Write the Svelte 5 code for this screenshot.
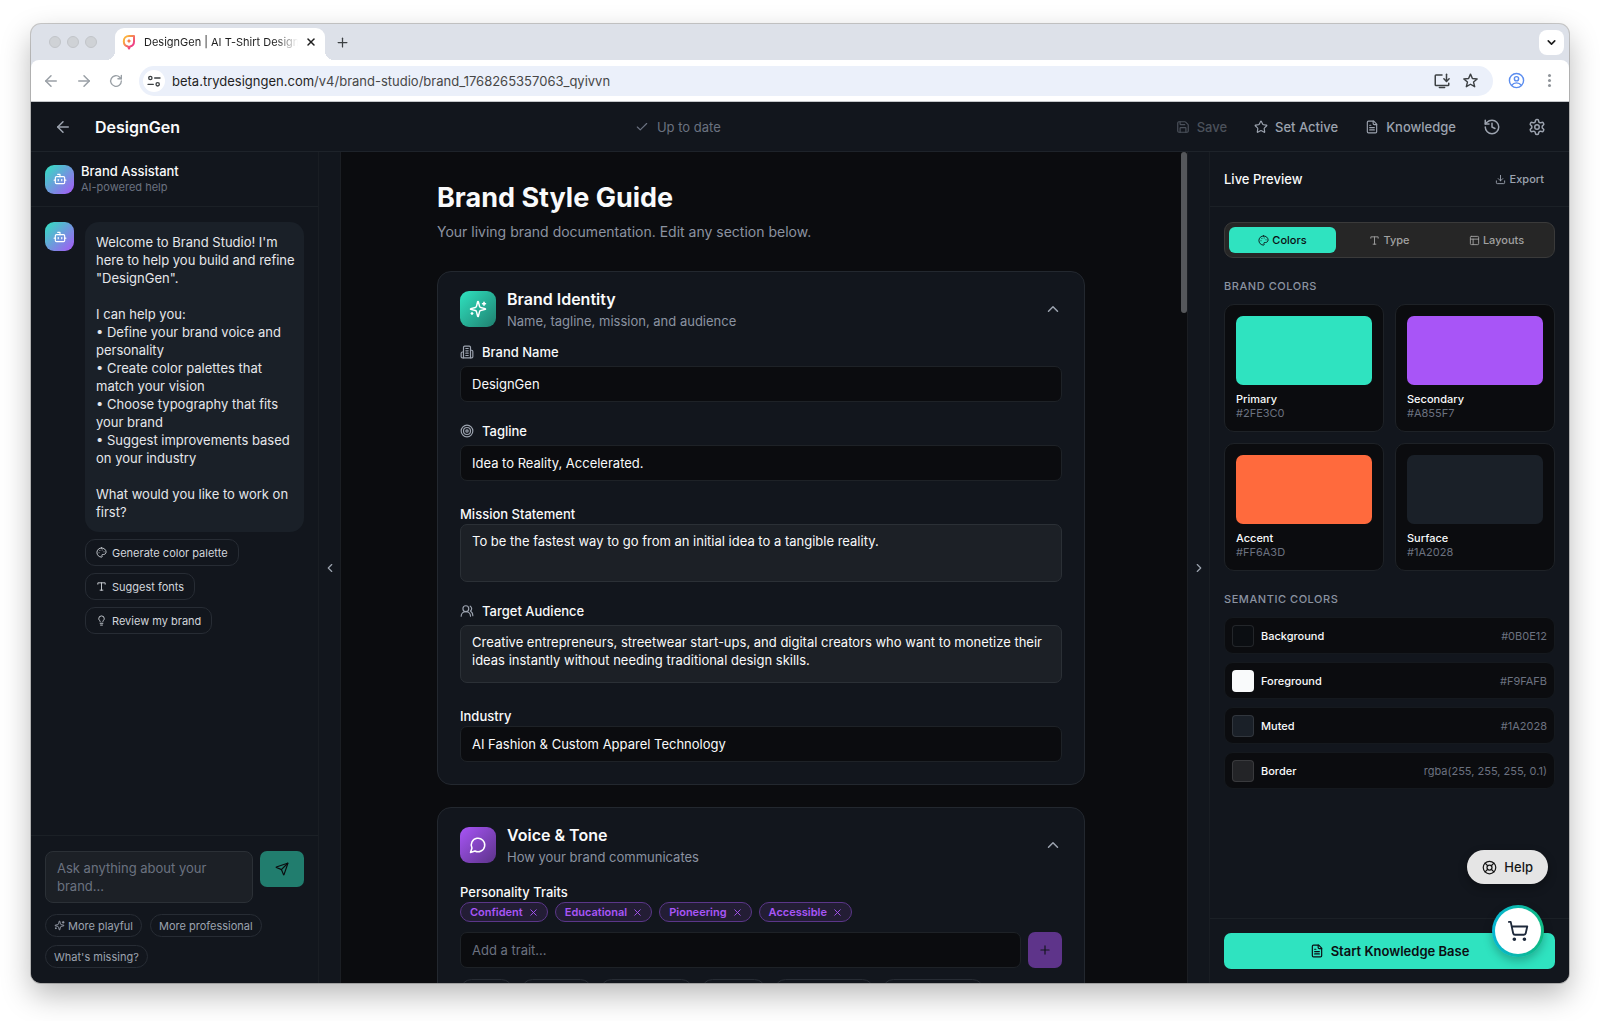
<script lang="ts">
  const icons: Record<string, string[]> = {
    arrowLeft: ["m12 19-7-7 7-7", "M19 12H5"],
    arrowRight: ["m12 5 7 7-7 7", "M5 12h14"],
    reload: ["M20 12a8 8 0 1 1-2.4-5.7L20 8.6", "M20 3.5v5.1h-5.1"],
    close: ["M18 6 6 18", "m6 6 12 12"],
    plus: ["M5 12h14", "M12 5v14"],
    check: ["M20 6 9 17l-5-5"],
    chevronDown: ["m6 9 6 6 6-6"],
    chevronUp: ["m18 15-6-6-6 6"],
    chevronLeft: ["m15 18-6-6 6-6"],
    chevronRight: ["m9 18 6-6-6-6"],
    tune: [
      "M4 7.5a2.5 2.5 0 1 0 5 0a2.5 2.5 0 1 0-5 0",
      "M13 7.5h8",
      "M3 17h8",
      "M15 17a2.5 2.5 0 1 0 5 0a2.5 2.5 0 1 0-5 0",
    ],
    install: [
      "M12 4H4a1 1 0 0 0-1 1v12a1 1 0 0 0 1 1h16a1 1 0 0 0 1-1v-2",
      "M18 3v9",
      "m14.5 9 3.5 3.5L21.5 9",
      "M8.5 20.5h7",
    ],
    sharpStar: [
      "m12 3 2.7 6.2 6.7.6-5.1 4.4 1.6 6.6L12 17.3l-5.9 3.5 1.6-6.6-5.1-4.4 6.7-.6z",
    ],
    profile: [
      "M2 12a10 10 0 1 0 20 0a10 10 0 1 0-20 0",
      "M9 9.5a3 3 0 1 0 6 0a3 3 0 1 0-6 0",
      "M5.5 18.5c1.5-2.3 3.8-3.2 6.5-3.2s5 .9 6.5 3.2",
    ],
    save: [
      "M15.2 3a2 2 0 0 1 1.4.6l3.8 3.8a2 2 0 0 1 .6 1.4V19a2 2 0 0 1-2 2H5a2 2 0 0 1-2-2V5a2 2 0 0 1 2-2z",
      "M17 21v-7a1 1 0 0 0-1-1H8a1 1 0 0 0-1 1v7",
      "M7 3v4a1 1 0 0 0 1 1h7",
    ],
    star: [
      "M11.525 2.295a.53.53 0 0 1 .95 0l2.31 4.679a2.123 2.123 0 0 0 1.595 1.16l5.166.756a.53.53 0 0 1 .294.904l-3.736 3.638a2.123 2.123 0 0 0-.611 1.878l.882 5.14a.53.53 0 0 1-.771.56l-4.618-2.428a2.122 2.122 0 0 0-1.973 0L6.396 21.01a.53.53 0 0 1-.77-.56l.881-5.139a2.122 2.122 0 0 0-.611-1.879L2.16 9.795a.53.53 0 0 1 .294-.906l5.165-.755a2.122 2.122 0 0 0 1.597-1.16z",
    ],
    file: [
      "M15 2H6a2 2 0 0 0-2 2v16a2 2 0 0 0 2 2h12a2 2 0 0 0 2-2V7Z",
      "M14 2v4a2 2 0 0 0 2 2h4",
      "M10 9H8",
      "M16 13H8",
      "M16 17H8",
    ],
    history: [
      "M3 12a9 9 0 1 0 9-9 9.75 9.75 0 0 0-6.74 2.74L3 8",
      "M3 3v5h5",
      "M12 7v5l4 2",
    ],
    settings: [
      "M12.22 2h-.44a2 2 0 0 0-2 2v.18a2 2 0 0 1-1 1.73l-.43.25a2 2 0 0 1-2 0l-.15-.08a2 2 0 0 0-2.73.73l-.22.38a2 2 0 0 0 .73 2.73l.15.1a2 2 0 0 1 1 1.72v.51a2 2 0 0 1-1 1.74l-.15.09a2 2 0 0 0-.73 2.73l.22.38a2 2 0 0 0 2.73.73l.15-.08a2 2 0 0 1 2 0l.43.25a2 2 0 0 1 1 1.73V20a2 2 0 0 0 2 2h.44a2 2 0 0 0 2-2v-.18a2 2 0 0 1 1-1.73l.43-.25a2 2 0 0 1 2 0l.15.08a2 2 0 0 0 2.73-.73l.22-.39a2 2 0 0 0-.73-2.73l-.15-.08a2 2 0 0 1-1-1.74v-.5a2 2 0 0 1 1-1.74l.15-.09a2 2 0 0 0 .73-2.73l-.22-.38a2 2 0 0 0-2.73-.73l-.15.08a2 2 0 0 1-2 0l-.43-.25a2 2 0 0 1-1-1.73V4a2 2 0 0 0-2-2z",
      "M9 12a3 3 0 1 0 6 0a3 3 0 1 0-6 0",
    ],
    bot: [
      "M12 8V4H8",
      "M6 8h12a2 2 0 0 1 2 2v8a2 2 0 0 1-2 2H6a2 2 0 0 1-2-2v-8a2 2 0 0 1 2-2z",
      "M2 14h2",
      "M20 14h2",
      "M15 13v2",
      "M9 13v2",
    ],
    palette: [
      "M12 2C6.5 2 2 6.5 2 12s4.5 10 10 10c.926 0 1.648-.746 1.648-1.688 0-.437-.18-.835-.437-1.125-.29-.289-.438-.652-.438-1.125a1.64 1.64 0 0 1 1.668-1.668h1.996c3.051 0 5.555-2.503 5.555-5.554C21.965 6.012 17.461 2 12 2z",
      "M13.5 6.5h.01",
      "M17.5 10.5h.01",
      "M8.5 7.5h.01",
      "M6.5 12.5h.01",
    ],
    type: ["M4 7V4h16v3", "M9 20h6", "M12 4v16"],
    bulb: [
      "M15 14c.2-1 .7-1.7 1.5-2.5 1-.9 1.5-2.2 1.5-3.5A6 6 0 0 0 6 8c0 1 .2 2.2 1.5 3.5.7.7 1.3 1.5 1.5 2.5",
      "M9 18h6",
      "M10 22h4",
    ],
    send: [
      "M14.536 21.686a.5.5 0 0 0 .937-.024l6.5-19a.496.496 0 0 0-.635-.635l-19 6.5a.5.5 0 0 0-.024.937l7.93 3.18a2 2 0 0 1 1.112 1.11z",
      "m21.854 2.147-10.94 10.939",
    ],
    sparkles: [
      "M9.937 15.5A2 2 0 0 0 8.5 14.063l-6.135-1.582a.5.5 0 0 1 0-.962L8.5 9.936A2 2 0 0 0 9.937 8.5l1.582-6.135a.5.5 0 0 1 .963 0L14.063 8.5A2 2 0 0 0 15.5 9.937l6.135 1.581a.5.5 0 0 1 0 .964L15.5 14.063a2 2 0 0 0-1.437 1.437l-1.582 6.135a.5.5 0 0 1-.963 0z",
      "M20 3v4",
      "M22 5h-4",
      "M4 17v2",
      "M5 18H3",
    ],
    building: [
      "M6 22V4a2 2 0 0 1 2-2h8a2 2 0 0 1 2 2v18Z",
      "M6 12H4a2 2 0 0 0-2 2v6a2 2 0 0 0 2 2h2",
      "M18 9h2a2 2 0 0 1 2 2v9a2 2 0 0 1-2 2h-2",
      "M10 6h4",
      "M10 10h4",
      "M10 14h4",
      "M10 18h4",
    ],
    target: [
      "M2 12a10 10 0 1 0 20 0a10 10 0 1 0-20 0",
      "M6 12a6 6 0 1 0 12 0a6 6 0 1 0-12 0",
      "M10 12a2 2 0 1 0 4 0a2 2 0 1 0-4 0",
    ],
    users: [
      "M18 21a8 8 0 0 0-16 0",
      "M5 8a5 5 0 1 0 10 0a5 5 0 1 0-10 0",
      "M22 20c0-3.37-2-6.5-4-8a5 5 0 0 0-.45-8.3",
    ],
    message: ["M7.9 20A9 9 0 1 0 4 16.1L2 22Z"],
    download: [
      "M21 15v4a2 2 0 0 1-2 2H5a2 2 0 0 1-2-2v-4",
      "m7 10 5 5 5-5",
      "M12 15V3",
    ],
    layout: [
      "M5 3h14a2 2 0 0 1 2 2v14a2 2 0 0 1-2 2H5a2 2 0 0 1-2-2V5a2 2 0 0 1 2-2z",
      "M3 9h18",
      "M9 21V9",
    ],
    lifebuoy: [
      "M2 12a10 10 0 1 0 20 0a10 10 0 1 0-20 0",
      "m4.93 4.93 4.24 4.24",
      "m14.83 9.17 4.24-4.24",
      "m14.83 14.83 4.24 4.24",
      "m9.17 14.83-4.24 4.24",
      "M8 12a4 4 0 1 0 8 0a4 4 0 1 0-8 0",
    ],
    cart: [
      "M7 21a1 1 0 1 0 2 0a1 1 0 1 0-2 0",
      "M18 21a1 1 0 1 0 2 0a1 1 0 1 0-2 0",
      "M2.05 2.05h2l2.66 12.42a2 2 0 0 0 2 1.58h9.78a2 2 0 0 0 1.95-1.57l1.65-7.43H5.12",
    ],
  };

  const welcome = `Welcome to Brand Studio! I'm here to help you build and refine "DesignGen".

I can help you:
• Define your brand voice and personality
• Create color palettes that match your vision
• Choose typography that fits your brand
• Suggest improvements based on your industry

What would you like to work on first?`;

  const suggestions = [
    { icon: "palette", label: "Generate color palette" },
    { icon: "type", label: "Suggest fonts" },
    { icon: "bulb", label: "Review my brand" },
  ];

  const tabs = [
    { icon: "palette", label: "Colors" },
    { icon: "type", label: "Type" },
    { icon: "layout", label: "Layouts" },
  ];

  const brandColors = [
    { name: "Primary", value: "#2FE3C0" },
    { name: "Secondary", value: "#A855F7" },
    { name: "Accent", value: "#FF6A3D" },
    { name: "Surface", value: "#1A2028" },
  ];

  const semanticColors = [
    { name: "Background", value: "#0B0E12" },
    { name: "Foreground", value: "#F9FAFB" },
    { name: "Muted", value: "#1A2028" },
    { name: "Border", value: "rgba(255, 255, 255, 0.1)" },
  ];

  // widths of the placeholder pills under the trait input
  const pillWidths = [53, 71, 93, 65, 100, 102];

  let activeTab = $state("Colors");
  let identityOpen = $state(true);
  let voiceOpen = $state(true);
  let message = $state("");
  let newTrait = $state("");
  let traits = $state(["Confident", "Educational", "Pioneering", "Accessible"]);
  let brand = $state({
    name: "DesignGen",
    tagline: "Idea to Reality, Accelerated.",
    mission: "To be the fastest way to go from an initial idea to a tangible reality.",
    audience:
      "Creative entrepreneurs, streetwear start-ups, and digital creators who want to monetize their ideas instantly without needing traditional design skills.",
    industry: "AI Fashion & Custom Apparel Technology",
  });

  let add_trait = () => {
    if (newTrait.trim() === "") return;
    traits.push(newTrait.trim());
    newTrait = "";
  };
  let remove_trait = (trait: string) => {
    traits = traits.filter((t) => t !== trait);
  };
</script>

{#snippet icon(name: string, size = 14, stroke = 2)}
  <svg
    width={size}
    height={size}
    viewBox="0 0 24 24"
    fill="none"
    stroke="currentColor"
    stroke-width={stroke}
    stroke-linecap="round"
    stroke-linejoin="round"
    aria-hidden="true"
  >
    {#each icons[name] as d}
      <path {d} />
    {/each}
  </svg>
{/snippet}

<div class="desktop">
  <div class="window">
    <div class="tab-strip">
      <div class="lights"><i></i><i></i><i></i></div>
      <div class="browser-tab">
        <svg width="16" height="18" viewBox="0 0 16 18" fill="none" aria-hidden="true">
          <defs>
            <linearGradient id="fav" x1="0" y1="0" x2="1" y2="1">
              <stop offset="0.2" stop-color="#fbae3c" />
              <stop offset="0.8" stop-color="#ee3f86" />
            </linearGradient>
          </defs>
          <path
            d="M8 3h5v5.500c0 2.800-1.500 4.600-4 5L8 15.500l-1-2C4.300 13 2.800 11 2.800 8.200 2.800 5.200 5 3 8 3z"
            stroke="url(#fav)"
            stroke-width="2"
            stroke-linejoin="round"
          />
          <path d="M8 5.500l.8 1.700 1.700.8-1.700.8L8 10.500l-.8-1.700L5.500 8l1.700-.8z" fill="#f7763f" />
        </svg>
        <span class="tab-title">DesignGen | AI T-Shirt Design</span>
        <button class="plain" aria-label="Close tab">{@render icon("close", 12, 3)}</button>
      </div>
      <button class="plain new-tab" aria-label="New tab">{@render icon("plus", 15, 2)}</button>
      <button class="tab-search" aria-label="Search tabs">{@render icon("chevronDown", 13, 3)}</button>
    </div>

    <div class="toolbar">
      <button class="plain dim" aria-label="Back">{@render icon("arrowLeft", 18, 2)}</button>
      <button class="plain dim" aria-label="Forward">{@render icon("arrowRight", 18, 2)}</button>
      <button class="plain dim" aria-label="Reload">{@render icon("reload", 16, 2)}</button>
      <div class="address">
        <button class="site-info" aria-label="Site information">{@render icon("tune", 16, 2)}</button>
        <span class="url"><b>beta.trydesigngen.com</b>/v4/brand-studio/brand_1768265357063_qyivvn</span>
        <button class="plain" aria-label="Install app">{@render icon("install", 18, 2)}</button>
        <button class="plain" aria-label="Bookmark">{@render icon("sharpStar", 17, 2)}</button>
      </div>
      <button class="plain profile" aria-label="Profile">{@render icon("profile", 17, 2)}</button>
      <button class="plain dots" aria-label="Menu"><i></i><i></i><i></i></button>
    </div>

    <div class="app">
      <header class="app-header">
        <div class="header-side">
          <button class="plain" aria-label="Back">{@render icon("arrowLeft", 18, 2)}</button>
          <span class="brand-name">DesignGen</span>
        </div>
        <span class="status">{@render icon("check", 14, 2)}Up to date</span>
        <div class="header-side actions">
          <button class="plain disabled" disabled>{@render icon("save", 14)}Save</button>
          <button class="plain">{@render icon("star", 14)}Set Active</button>
          <button class="plain">{@render icon("file", 14)}Knowledge</button>
          <button class="plain" aria-label="History">{@render icon("history", 18)}</button>
          <button class="plain" aria-label="Settings">{@render icon("settings", 18)}</button>
        </div>
      </header>

      <div class="columns">
        <aside class="assistant">
          <div class="panel-header">
            <span class="avatar">{@render icon("bot", 14)}</span>
            <div>
              <h2>Brand Assistant</h2>
              <p class="hint">AI-powered help</p>
            </div>
          </div>
          <div class="chat">
            <span class="avatar">{@render icon("bot", 14)}</span>
            <div class="chat-body">
              <p class="bubble">{welcome}</p>
              {#each suggestions as item}
                <button class="suggestion">{@render icon(item.icon, 11)}{item.label}</button>
              {/each}
            </div>
          </div>
          <div class="composer">
            <div class="composer-row">
              <textarea
                rows="2"
                aria-label="Message"
                placeholder="Ask anything about your brand..."
                bind:value={message}
              ></textarea>
              <button class="send" aria-label="Send">{@render icon("send", 14)}</button>
            </div>
            <div class="prompts">
              <button class="pill">{@render icon("sparkles", 11)}More playful</button>
              <button class="pill">More professional</button>
              <button class="pill">What's missing?</button>
            </div>
          </div>
        </aside>
        <button class="handle left" aria-label="Collapse assistant">{@render icon("chevronLeft", 14)}</button>

        <main>
          <div class="guide">
            <h1>Brand Style Guide</h1>
            <p class="lead">Your living brand documentation. Edit any section below.</p>

            <section class="card">
              <button class="card-header" onclick={() => (identityOpen = !identityOpen)}>
                <span class="card-icon teal">{@render icon("sparkles", 18)}</span>
                <span class="card-title">
                  <strong>Brand Identity</strong>
                  <span>Name, tagline, mission, and audience</span>
                </span>
                {@render icon(identityOpen ? "chevronUp" : "chevronDown", 18, 2)}
              </button>
              {#if identityOpen}
                <div class="fields">
                  <div class="field">
                    <label class="with-icon" for="name">{@render icon("building")}Brand Name</label>
                    <input id="name" type="text" bind:value={brand.name} />
                  </div>
                  <div class="field">
                    <label class="with-icon" for="tagline">{@render icon("target")}Tagline</label>
                    <input id="tagline" type="text" bind:value={brand.tagline} />
                  </div>
                  <div class="field">
                    <label for="mission">Mission Statement</label>
                    <textarea id="mission" bind:value={brand.mission}></textarea>
                  </div>
                  <div class="field">
                    <label class="with-icon" for="audience">{@render icon("users")}Target Audience</label>
                    <textarea id="audience" bind:value={brand.audience}></textarea>
                  </div>
                  <div class="field">
                    <label for="industry">Industry</label>
                    <input id="industry" type="text" bind:value={brand.industry} />
                  </div>
                </div>
              {/if}
            </section>

            <section class="card">
              <button class="card-header" onclick={() => (voiceOpen = !voiceOpen)}>
                <span class="card-icon purple">{@render icon("message", 18)}</span>
                <span class="card-title">
                  <strong>Voice &amp; Tone</strong>
                  <span>How your brand communicates</span>
                </span>
                {@render icon(voiceOpen ? "chevronUp" : "chevronDown", 18, 2)}
              </button>
              {#if voiceOpen}
                <div class="field">
                  <label for="trait">Personality Traits</label>
                  <div class="traits">
                    {#each traits as trait}
                      <span class="trait">
                        {trait}
                        <button class="plain" aria-label="Remove {trait}" onclick={() => remove_trait(trait)}>
                          {@render icon("close", 11)}
                        </button>
                      </span>
                    {/each}
                  </div>
                  <div class="trait-row">
                    <input id="trait" type="text" placeholder="Add a trait..." bind:value={newTrait} />
                    <button class="add" aria-label="Add trait" onclick={add_trait}>{@render icon("plus", 14)}</button>
                  </div>
                  <div class="prompts">
                    {#each pillWidths as width}
                      <span class="pill" style="width: {width}px"></span>
                    {/each}
                  </div>
                </div>
              {/if}
            </section>
          </div>
          <div class="scrollbar"></div>
        </main>

        <button class="handle right" aria-label="Collapse preview">{@render icon("chevronRight", 14)}</button>
        <aside class="preview">
          <div class="panel-header">
            <h2>Live Preview</h2>
            <button class="plain export">{@render icon("download", 11)}Export</button>
          </div>
          <div class="preview-body">
            <div class="tabs">
              {#each tabs as tab}
                <button class:active={activeTab === tab.label} onclick={() => (activeTab = tab.label)}>
                  {@render icon(tab.icon, 11)}{tab.label}
                </button>
              {/each}
            </div>
            <h3>Brand Colors</h3>
            <div class="swatches">
              {#each brandColors as color}
                <div class="swatch">
                  <div class="fill" style="background: {color.value}"></div>
                  <strong>{color.name}</strong>
                  <span>{color.value}</span>
                </div>
              {/each}
            </div>
            <h3>Semantic Colors</h3>
            <ul>
              {#each semanticColors as color}
                <li>
                  <i style="background: {color.value}"></i>
                  <strong>{color.name}</strong>
                  <span>{color.value}</span>
                </li>
              {/each}
            </ul>
          </div>
          <div class="preview-footer">
            <button class="start">{@render icon("file", 14)}Start Knowledge Base</button>
          </div>
          <button class="help">{@render icon("lifebuoy", 15)}Help</button>
          <button class="cart" aria-label="Cart"><span>{@render icon("cart", 22, 2)}</span></button>
        </aside>
      </div>
    </div>
  </div>
</div>

<style>
  :global(body) {
    background: #ffffff;
  }

  * {
    box-sizing: border-box;
  }

  .desktop {
    display: flex;
    height: 100vh;
    padding: 24px 31px 38px;
    overflow: hidden;
    font-family: Inter, "Liberation Sans", sans-serif;
    font-size: 13px;
    line-height: 18px;
    color: #f9fafb;
  }

  .window {
    display: flex;
    flex: 1;
    min-width: 0;
    flex-direction: column;
    overflow: hidden;
    border-radius: 10px;
    background: #dde1e9;
    box-shadow:
      0 0 0 1px rgba(0, 0, 0, 0.2),
      0 12px 30px rgba(0, 0, 0, 0.28);
  }

  h1,
  h2,
  h3,
  p,
  ul {
    margin: 0;
    padding: 0;
  }

  svg {
    flex: none;
    display: block;
  }

  button,
  input,
  textarea {
    font: inherit;
    color: inherit;
  }

  button {
    display: inline-flex;
    align-items: center;
    justify-content: center;
    border: 0;
    cursor: pointer;
    white-space: nowrap;
  }

  .plain {
    padding: 0;
    background: none;
  }

  /* browser chrome */
  .tab-strip {
    display: flex;
    align-items: center;
    height: 36px;
    padding: 0 5px 0 18px;
    color: #1f1f1f;
  }
  .lights {
    display: flex;
    gap: 6px;
    margin-right: 18px;
  }
  .lights i {
    width: 12px;
    height: 12px;
    border: 1px solid #c2c5c9;
    border-radius: 50%;
    background: #cfd2d6;
  }
  .browser-tab {
    position: relative;
    align-self: flex-end;
    display: flex;
    align-items: center;
    gap: 7px;
    width: 210px;
    height: 32px;
    padding: 0 8px 4px 6px;
    border-radius: 9px 9px 0 0;
    background: #ffffff;
  }
  .browser-tab::before,
  .browser-tab::after {
    position: absolute;
    bottom: 0;
    width: 9px;
    height: 9px;
    content: "";
  }
  .browser-tab::before {
    right: 100%;
    background: radial-gradient(circle at 0 0, transparent 9px, #ffffff 9px);
  }
  .browser-tab::after {
    left: 100%;
    background: radial-gradient(circle at 100% 0, transparent 9px, #ffffff 9px);
  }
  .tab-title {
    flex: 1;
    overflow: hidden;
    white-space: nowrap;
    font-size: 11px;
    mask-image: linear-gradient(90deg, #000 85%, transparent);
  }
  .new-tab {
    margin-left: 10px;
    color: #3c4043;
  }
  .tab-search {
    width: 25px;
    height: 25px;
    margin-left: auto;
    padding: 0;
    border-radius: 8px;
    background: #ffffff;
  }
  .toolbar {
    display: flex;
    align-items: center;
    gap: 15px;
    height: 42px;
    padding: 0 11px;
    border-bottom: 1px solid #c4c6c9;
    border-radius: 8px 8px 0 0;
    background: #ffffff;
    color: #3c4043;
  }
  .dim {
    color: #9aa0a6;
  }
  .address {
    display: flex;
    flex: 1;
    align-items: center;
    gap: 11px;
    height: 30px;
    padding: 0 14px 0 4px;
    border-radius: 15px;
    background: #ebf0fa;
  }
  .site-info {
    width: 22px;
    height: 22px;
    margin-right: -4px;
    padding: 0;
    border-radius: 50%;
    background: #ffffff;
  }
  .url {
    flex: 1;
    color: #474747;
  }
  .url b {
    font-weight: 400;
    color: #1f1f1f;
  }
  .profile {
    color: #5b8def;
  }
  .dots {
    flex-direction: column;
    gap: 2px;
    width: 18px;
  }
  .dots i {
    width: 3px;
    height: 3px;
    border-radius: 50%;
    background: #8f9499;
  }

  /* application */
  .app {
    display: flex;
    flex: 1;
    min-height: 0;
    flex-direction: column;
    background: #0b0c0f;
  }
  .app-header {
    display: flex;
    align-items: center;
    justify-content: space-between;
    height: 50px;
    padding: 0 23px;
    border-bottom: 1px solid #1e232a;
    background: #12161d;
    color: #9ca3af;
  }
  .header-side {
    display: flex;
    align-items: center;
    gap: 23px;
  }
  .brand-name {
    font-size: 16px;
    font-weight: 600;
    color: #f9fafb;
  }
  .status {
    display: flex;
    align-items: center;
    gap: 8px;
    color: #6b7280;
  }
  .actions {
    gap: 27px;
    font-weight: 500;
  }
  .actions button {
    gap: 7px;
  }
  .disabled {
    color: #4b515b;
  }
  .columns {
    display: flex;
    flex: 1;
    min-height: 0;
  }
  .assistant {
    display: flex;
    flex: none;
    flex-direction: column;
    width: 288px;
    border-right: 1px solid #191d23;
    background: #12161d;
  }
  .panel-header {
    display: flex;
    align-items: center;
    gap: 7px;
    height: 55px;
    padding: 0 14px;
    border-bottom: 1px solid #1b2026;
  }
  h2 {
    font-size: 13px;
    font-weight: 500;
    line-height: 17px;
  }
  .hint {
    font-size: 11px;
    line-height: 15px;
    color: #6b7280;
  }
  .avatar {
    display: flex;
    flex: none;
    align-items: center;
    justify-content: center;
    width: 29px;
    height: 29px;
    border-radius: 9px;
    background: linear-gradient(135deg, #2fe3c0, #a855f7);
    color: #ffffff;
  }
  .chat {
    display: flex;
    flex: 1;
    gap: 11px;
    min-height: 0;
    padding: 15px 14px;
  }
  .chat-body {
    display: flex;
    flex: 1;
    flex-direction: column;
    align-items: flex-start;
    gap: 7px;
  }
  .bubble {
    padding: 11px 8px 11px 11px;
    border-radius: 14px;
    background: #1a2028;
    color: #e5e7eb;
    white-space: pre-line;
  }
  .suggestion {
    gap: 5px;
    height: 27px;
    padding: 0 10px;
    border: 1px solid #272c34;
    border-radius: 10px;
    background: #12161d;
    font-size: 11px;
    color: #d1d5db;
  }
  .composer {
    display: flex;
    flex-direction: column;
    gap: 11px;
    padding: 15px 14px;
    border-top: 1px solid #1b2026;
  }
  .composer-row {
    display: flex;
    align-items: flex-start;
    gap: 7px;
  }
  input,
  textarea {
    display: block;
    width: 100%;
    margin: 0;
    border: 1px solid #1e2227;
    border-radius: 7px;
    outline: none;
    background: #0b0c0f;
    color: #f9fafb;
  }
  input {
    height: 36px;
    padding: 0 11px;
  }
  textarea {
    height: 58px;
    padding: 7px 11px;
    border-color: #2b3036;
    background: #1c2026;
    resize: none;
  }
  .composer textarea {
    flex: 1;
    height: 52px;
    border-radius: 8px;
  }
  input::placeholder,
  textarea::placeholder {
    color: #6b7280;
    opacity: 1;
  }
  .send {
    width: 44px;
    height: 36px;
    border-radius: 7px;
    background: #217d6e;
    color: #0b0c0f;
  }
  .prompts {
    display: flex;
    flex-wrap: wrap;
    gap: 8px;
  }
  .pill {
    gap: 3px;
    height: 23px;
    padding: 0 8px;
    border: 1px solid #272c34;
    border-radius: 12px;
    background: none;
    font-size: 11px;
    color: #9ca3af;
  }
  .handle {
    flex: none;
    width: 22px;
    padding: 0;
    background: #12161d;
    color: #9ca3af;
  }
  .handle.left {
    border-right: 1px solid #1b1e23;
  }
  .handle.right {
    border-left: 1px solid #1b1e23;
  }

  main {
    display: flex;
    flex: 1;
    min-width: 0;
    overflow: hidden;
  }
  .scrollbar {
    flex: none;
    width: 6px;
    height: 161px;
    border-radius: 3px;
    background: #55575b;
  }
  .guide {
    flex: 1;
    max-width: 648px;
    min-width: 0;
    margin: 0 auto;
    padding-top: 30px;
  }
  h1 {
    font-size: 27px;
    font-weight: 700;
    line-height: 32px;
  }
  .lead {
    margin: 7px 0 28px;
    font-size: 14px;
    line-height: 22px;
    color: #8b93a1;
  }
  .card {
    margin-bottom: 22px;
    padding: 15px 22px 22px;
    border: 1px solid #23282f;
    border-radius: 14px;
    background: #12161d;
  }
  .card-header {
    width: 100%;
    gap: 11px;
    margin-bottom: 12px;
    padding: 0;
    background: none;
    color: #9ca3af;
  }
  .card-icon {
    display: flex;
    align-items: center;
    justify-content: center;
    width: 36px;
    height: 36px;
    border-radius: 9px;
    color: #ffffff;
  }
  .teal {
    background: linear-gradient(135deg, #2fe3c0, #1f7f6f);
  }
  .purple {
    background: linear-gradient(135deg, #a855f7, #5c3389);
  }
  .card-title {
    flex: 1;
    text-align: left;
    line-height: 20px;
    color: #8b93a1;
  }
  .card-title strong,
  .card-title span {
    display: block;
  }
  .card-title strong {
    font-size: 16px;
    font-weight: 600;
    line-height: 24px;
    color: #f9fafb;
  }
  .fields {
    display: flex;
    flex-direction: column;
    gap: 20px;
  }
  label {
    display: flex;
    padding-top: 3px;
    font-weight: 500;
    line-height: 20px;
  }
  label.with-icon {
    align-items: center;
    gap: 8px;
    margin-bottom: 5px;
    padding-top: 0;
    line-height: 18px;
  }
  label :global(svg) {
    color: #9ca3af;
  }
  .traits {
    display: flex;
    gap: 7px;
    margin-bottom: 10px;
  }
  .trait {
    display: flex;
    align-items: center;
    gap: 5px;
    height: 20px;
    padding: 0 8px 0 9px;
    border: 1px solid #5b3689;
    border-radius: 10px;
    background: #231d35;
    font-size: 11px;
    font-weight: 600;
    color: #a855f7;
  }
  .trait-row {
    display: flex;
    gap: 7px;
    margin-bottom: 11px;
  }
  .add {
    flex: none;
    width: 34px;
    height: 36px;
    padding: 0;
    border-radius: 7px;
    background: #5e348a;
    color: #12161d;
  }

  .preview {
    position: relative;
    display: flex;
    flex: none;
    flex-direction: column;
    width: 360px;
    border-left: 1px solid #191d23;
    background: #12161d;
  }
  .preview .panel-header {
    justify-content: space-between;
    padding: 0 25px 0 14px;
  }
  .export {
    gap: 4px;
    font-size: 11px;
    font-weight: 500;
    color: #9ca3af;
  }
  .preview-body {
    flex: 1;
    min-height: 0;
    padding: 15px 14px;
  }
  .tabs {
    display: flex;
    height: 36px;
    padding: 4px;
    border: 1px solid #3a3a3a;
    border-radius: 9px;
    background: #262626;
  }
  .tabs button {
    flex: 1;
    gap: 3px;
    padding: 0;
    border-radius: 6px;
    background: none;
    font-size: 11px;
    font-weight: 500;
    color: #a1a1a1;
  }
  .tabs .active {
    background: #2fe3c0;
    color: #0b0e12;
  }
  h3 {
    margin: 19px 0 9px;
    font-size: 11px;
    font-weight: 500;
    line-height: 18px;
    letter-spacing: 0.05em;
    text-transform: uppercase;
    color: #8b93a1;
  }
  .swatches {
    display: grid;
    grid-template-columns: 1fr 1fr;
    gap: 11px;
  }
  .swatch {
    padding: 11px;
    border: 1px solid #1e2227;
    border-radius: 10px;
    background: #0b0c0f;
  }
  .fill {
    height: 69px;
    margin-bottom: 7px;
    border-radius: 7px;
  }
  strong {
    font-size: 11px;
    font-weight: 500;
  }
  .swatch strong,
  .swatch span {
    display: block;
    font-size: 11px;
    line-height: 14px;
  }
  .swatch span,
  li span {
    font-size: 11px;
    color: #6b7280;
  }
  ul {
    display: flex;
    flex-direction: column;
    gap: 8px;
    list-style: none;
  }
  li {
    display: flex;
    align-items: center;
    gap: 7px;
    height: 37px;
    padding: 0 7px;
    border: 1px solid #15191e;
    border-radius: 9px;
    background: #0b0c0f;
  }
  li i {
    width: 22px;
    height: 22px;
    border: 1px solid rgba(255, 255, 255, 0.1);
    border-radius: 4px;
  }
  li span {
    margin-left: auto;
  }
  .preview-footer {
    padding: 14px;
    border-top: 1px solid #1b2026;
  }
  .start {
    width: 100%;
    height: 36px;
    gap: 7px;
    border-radius: 7px;
    background: #2fe3c0;
    font-weight: 600;
    color: #0b0e12;
  }
  /* floating buttons over the preview panel */
  .help {
    position: absolute;
    right: 21px;
    bottom: 99px;
    gap: 7px;
    height: 34px;
    padding: 0 15px;
    border-radius: 17px;
    background: #e5e5e5;
    font-weight: 500;
    color: #171717;
    box-shadow: 0 4px 10px rgba(0, 0, 0, 0.3);
  }
  .cart {
    position: absolute;
    right: 25px;
    bottom: 26px;
    width: 52px;
    height: 52px;
    padding: 3px;
    border-radius: 50%;
    background: linear-gradient(90deg, #06b6d4, #10b981);
    box-shadow: 0 4px 10px rgba(0, 0, 0, 0.25);
  }
  .cart span {
    display: flex;
    align-items: center;
    justify-content: center;
    width: 100%;
    height: 100%;
    border-radius: 50%;
    background: #ffffff;
    color: #1e293b;
  }
</style>
